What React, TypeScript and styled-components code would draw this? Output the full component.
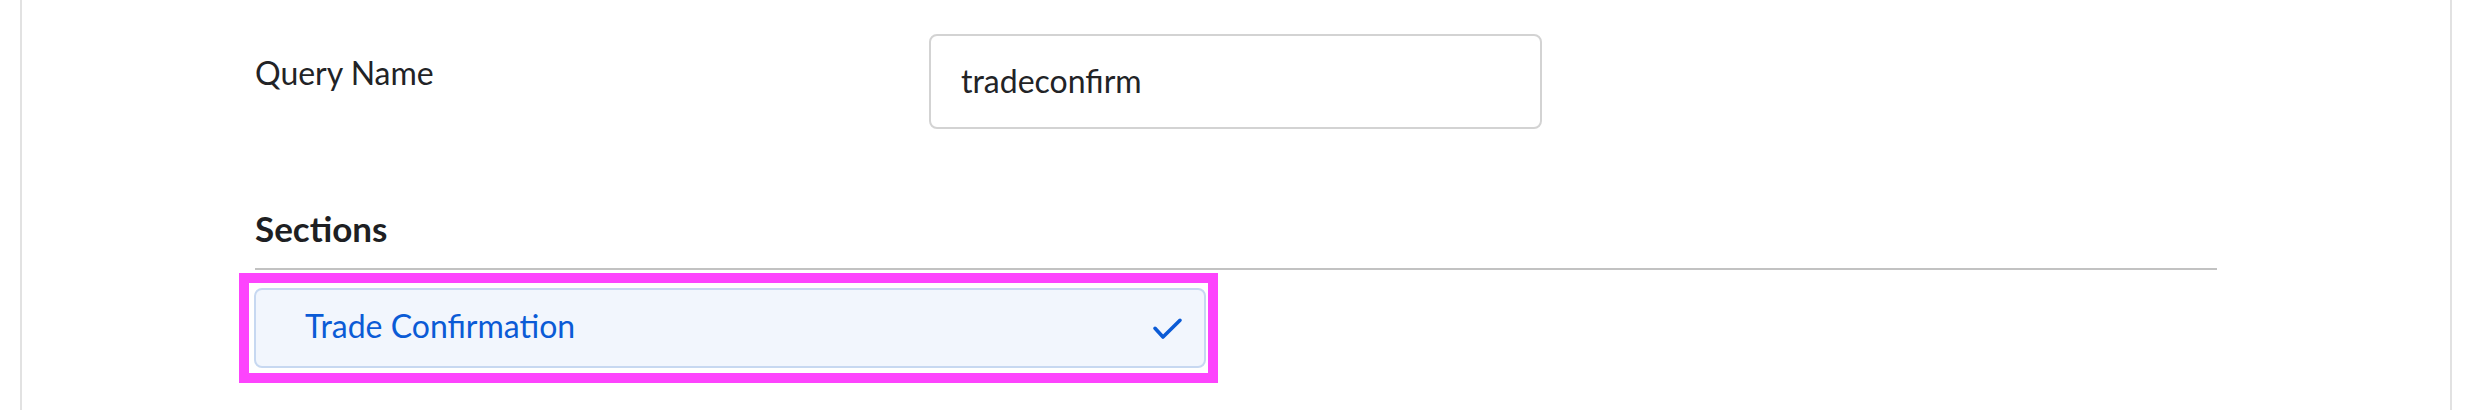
import React from "react";
import styled, { createGlobalStyle } from "styled-components";

const GlobalStyle = createGlobalStyle`
  html, body {
    margin: 0;
    padding: 0;
    background: #ffffff;
  }
  body {
    font-family: Lato, "Liberation Sans", Arial, sans-serif;
    color: #222326;
  }
  * { box-sizing: border-box; }
`;

const Panel = styled.div`
  margin: 0 26px 0 20px;
  min-height: 410px;
  border-left: 2px solid #e2e2e2;
  border-right: 2px solid #e2e2e2;
  padding: 34px 233px 0 233px;
  background: #ffffff;
`;

const FieldRow = styled.div`
  display: grid;
  grid-template-columns: 674px 613px;
  align-items: start;
`;

const FieldLabel = styled.label`
  padding-top: 20px;
  font-size: 32px;
  line-height: 38px;
  color: #222326;
`;

const TextInput = styled.input`
  width: 613px;
  height: 95px;
  border: 2px solid #d3d3d3;
  border-radius: 8px;
  padding: 0 30px 3px 30px;
  font-family: Lato, "Liberation Sans", Arial, sans-serif;
  font-size: 32px;
  line-height: 38px;
  color: #222326;
  background: #ffffff;
  outline: none;
`;

const SectionHeader = styled.h2`
  margin: 78px 0 0 0;
  padding-bottom: 19px;
  border-bottom: 2px solid #c2c2c2;
  font-size: 35px;
  line-height: 42px;
  font-weight: 700;
  color: #1e1f23;
`;

const Highlight = styled.div`
  margin: 3px 0 0 -16px;
  width: fit-content;
  border: 10px solid #fd44fd;
  padding: 5px 2px 5px 5px;
`;

const SectionItem = styled.div<{ $selected?: boolean }>`
  width: 952px;
  height: 80px;
  display: flex;
  align-items: center;
  justify-content: space-between;
  padding: 0 21px 0 49px;
  border: 2px solid #c7d8f1;
  border-radius: 8px;
  background: ${(p) => (p.$selected ? "#f2f6fd" : "#ffffff")};
`;

const ItemText = styled.span`
  font-size: 32px;
  line-height: 36px;
  padding-bottom: 5px;
  color: #0b5bd6;
`;

const Check = () => (
  <svg width="31" height="23" viewBox="0 0 31 23" fill="none">
    <path
      d="M3 11.3 L11 20 L28 3.3"
      stroke="#0b5bd6"
      strokeWidth="3.6"
      strokeLinecap="round"
      strokeLinejoin="round"
    />
  </svg>
);

export default function App() {
  return (
    <>
      <GlobalStyle />
      <Panel>
        <FieldRow>
          <FieldLabel>Query Name</FieldLabel>
          <TextInput defaultValue="tradeconfirm" />
        </FieldRow>
        <SectionHeader>Sections</SectionHeader>
        <Highlight>
          <SectionItem $selected>
            <ItemText>Trade Confirmation</ItemText>
            <Check />
          </SectionItem>
        </Highlight>
      </Panel>
    </>
  );
}
